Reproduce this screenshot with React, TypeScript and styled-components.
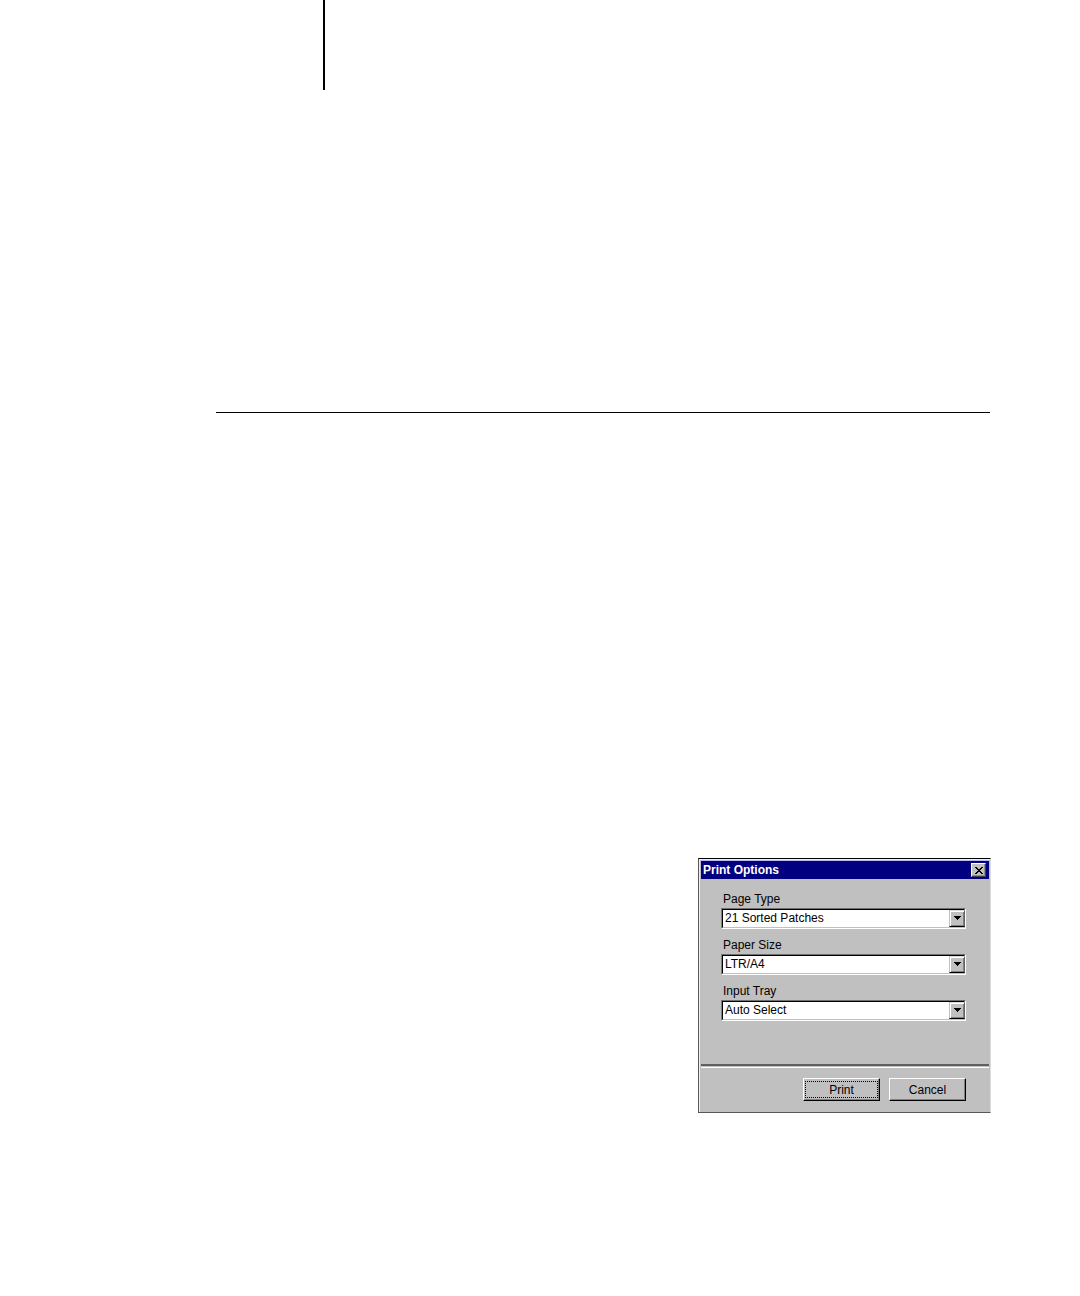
import React, { useId } from "react";
import styled, { createGlobalStyle } from "styled-components";

const GlobalStyle = createGlobalStyle`
  *, *::before, *::after { box-sizing: border-box; }
  body { margin: 0; background: #fff; }
`;

const Page = styled.main`
  display: flex;
  flex-direction: column;
  min-height: 100vh;
  padding: 0 89px 183px 216px;
  font-family: "Liberation Sans", Arial, sans-serif;
  font-size: 12px;
  line-height: 16px;
  color: #000;
`;

const HeaderMark = styled.div`
  width: 2px;
  height: 90px;
  margin-left: 107px;
  background: #000;
`;

const Rule = styled.hr`
  align-self: stretch;
  height: 1px;
  margin: 322px 1px 445px 0;
  border: 0;
  background: #000;
`;

const Dialog = styled.section`
  align-self: flex-end;
  width: 100%;
  max-width: 293px;
  padding: 1px 0 0 1px;
  border: 1px solid #58585c;
  border-top-color: #000;
  border-right-color: #dcdcdc;
  background: #c0c0c0;
  box-shadow: inset 1px 1px 0 #f0f0f8, inset 0 2px 0 #b8b8ec;
`;

const TitleBar = styled.header`
  display: flex;
  align-items: center;
  justify-content: space-between;
  height: 18px;
  margin: 1px 1px 0;
  padding: 0 3px 0 2px;
  background: #000080;
`;

const Title = styled.h1`
  margin: 0;
  font-size: 12px;
  line-height: 16px;
  font-weight: 700;
  color: #fff;
`;

const CloseButton = styled.button`
  display: flex;
  align-items: center;
  justify-content: center;
  width: 15px;
  height: 14px;
  padding: 0;
  border: 1px solid;
  border-color: #fff #404040 #404040 #fff;
  background: #c0c0c0;
  box-shadow: inset -1px -1px 0 #909090;
`;

const Fields = styled.div`
  display: flex;
  flex-direction: column;
  gap: 8px;
  padding: 12px 24px 43px 21px;
`;

const FieldGroup = styled.div`
  display: flex;
  flex-direction: column;
`;

const FieldLabel = styled.label`
  padding-left: 2px;
`;

const SelectFrame = styled.div`
  position: relative;
  height: 21px;
  margin-top: 1px;
  border: 1px solid;
  border-color: #707070 #fff #fff #808080;
  background: #fff;
`;

const Select = styled.select`
  display: block;
  appearance: none;
  width: 100%;
  height: 19px;
  margin: 0;
  padding: 0 18px 2px 2px;
  border: 1px solid;
  border-color: #000 #c0c0c0 #c0c0c0 #000;
  border-radius: 0;
  outline: 0;
  background: #fff;
  color: #000;
  font: inherit;
`;

const ArrowBox = styled.span`
  position: absolute;
  top: 1px;
  right: 0;
  display: flex;
  align-items: center;
  justify-content: center;
  width: 16px;
  height: 17px;
  padding-bottom: 2px;
  border: 1px solid;
  border-color: #dcdcdc #606060 #000 #c0c0c0;
  background: #c0c0c0;
  box-shadow: inset 1px 1px 0 #fff, inset -1px -1px 0 #808080;
  pointer-events: none;
`;

const Divider = styled.div`
  height: 4px;
  margin: 0 1px;
  border-top: 2px solid #606060;
  border-bottom: 1px solid #fff;
`;

const Actions = styled.footer`
  display: flex;
  justify-content: flex-end;
  gap: 9px;
  padding: 10px 24px 11px;
`;

const ActionButton = styled.button<{ $focused?: boolean }>`
  width: 77px;
  height: 23px;
  padding: 1px;
  border: 1px solid;
  border-color: #fff #000 #000 #fff;
  background: #c0c0c0;
  box-shadow: inset -1px -1px 0 #808080;
  color: #000;
  font: inherit;

  span {
    display: flex;
    align-items: center;
    justify-content: center;
    height: 17px;
    border: 1px dotted ${(p) => (p.$focused ? "#000" : "transparent")};
  }
`;

function Field({ label, options }: { label: string; options: string[] }) {
  const id = useId();
  return (
    <FieldGroup>
      <FieldLabel htmlFor={id}>{label}</FieldLabel>
      <SelectFrame>
        <Select id={id}>
          {options.map((option) => (
            <option key={option}>{option}</option>
          ))}
        </Select>
        <ArrowBox aria-hidden="true">
          <svg width="7" height="4" viewBox="0 0 7 4" shapeRendering="crispEdges">
            <path d="M0 0H7V1H6V2H5V3H4V4H3V3H2V2H1V1H0Z" />
          </svg>
        </ArrowBox>
      </SelectFrame>
    </FieldGroup>
  );
}

export default function App() {
  return (
    <>
      <GlobalStyle />
      <Page>
        <HeaderMark />
        <Rule />
        <Dialog role="dialog" aria-labelledby="print-options-title">
          <TitleBar>
            <Title id="print-options-title">Print Options</Title>
            <CloseButton type="button" aria-label="Close">
              <svg width="8" height="7" viewBox="0 0 8 7" shapeRendering="crispEdges">
                <path d="M0 0h2v1h1v1h2V1h1V0h2v1H7v1H6v1H5v1h1v1h1v1h1v1H6V6H5V5H3v1H2v1H0V6h1V5h1V4h1V3H2V2H1V1H0Z" />
              </svg>
            </CloseButton>
          </TitleBar>
          <Fields>
            <Field label="Page Type" options={["21 Sorted Patches"]} />
            <Field label="Paper Size" options={["LTR/A4"]} />
            <Field label="Input Tray" options={["Auto Select"]} />
          </Fields>
          <Divider />
          <Actions>
            <ActionButton type="button" $focused>
              <span>Print</span>
            </ActionButton>
            <ActionButton type="button">
              <span>Cancel</span>
            </ActionButton>
          </Actions>
        </Dialog>
      </Page>
    </>
  );
}
